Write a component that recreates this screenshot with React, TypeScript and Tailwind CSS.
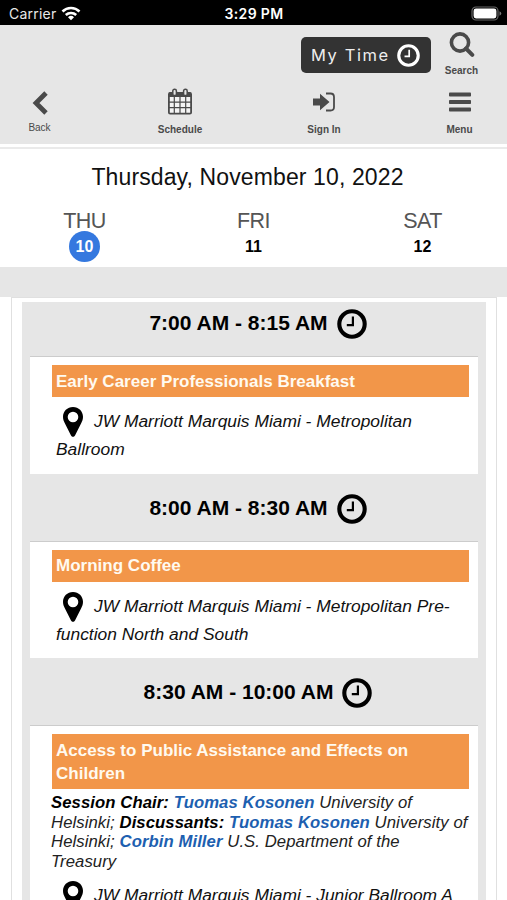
import type { ReactNode } from "react";

const ClockIcon = ({ className }: { className?: string }) => (
  <svg viewBox="0 0 30 30" className={className} fill="none" stroke="currentColor">
    <circle cx="15" cy="15" r="12.7" strokeWidth="4.1" />
    <path d="M15.9 7.6V16.2H9.8" strokeWidth="2.2" />
  </svg>
);

const PinIcon = () => (
  <svg viewBox="0 0 20 30" className="w-5 h-[30px] shrink-0" fill="black">
    <path
      fillRule="evenodd"
      d="M10 0C4.3 0 0 4.4 0 9.8c0 2.6.8 4.3 1.7 6.3l6.3 12.3c.9 1.8 3.1 1.8 4 0l6.3-12.3c.9-2 1.7-3.7 1.7-6.3C20 4.4 15.7 0 10 0Zm0 4.7a5.3 5.3 0 1 1 0 10.6a5.3 5.3 0 0 1 0-10.6Z"
    />
  </svg>
);

const CalendarIcon = () => (
  <svg viewBox="0 0 26 28" className="w-[26px] h-7" fill="none" stroke="currentColor">
    <rect x="1.9" y="5" width="22.2" height="20.6" rx="1.2" fill="#f4f4f4" strokeWidth="1.8" />
    <path d="M2 4.5H24V9H2Z" fill="currentColor" stroke="none" />
    <path d="M2 14.2H24M2 19.6H24M7.3 9V25M13 9V25M18.7 9V25" strokeWidth="1.2" />
    <rect x="5.8" y="1.2" width="3.6" height="6.4" rx="1.7" fill="#e6e6e6" strokeWidth="1.5" />
    <rect x="16.6" y="1.2" width="3.6" height="6.4" rx="1.7" fill="#e6e6e6" strokeWidth="1.5" />
  </svg>
);

const StatusBar = () => (
  <div className="flex h-[25px] items-center bg-black text-white font-[Inter,sans-serif]">
    <div className="flex w-[220px] items-center pl-[9px] pt-0.5 text-[14px] tracking-[0.22px] text-[#e8e8e8]">
      Carrier
      <svg viewBox="0 0 20 15" className="ml-[5px] h-[15px] w-5" fill="none" stroke="white" strokeWidth="2.6">
        <path d="M1.5 5.5A12.2 12.2 0 0 1 18.5 5.5" />
        <path d="M4.8 9A7.6 7.6 0 0 1 15.2 9" />
        <path d="M10 14.3L7 11.3A4.3 4.3 0 0 1 13 11.3Z" fill="white" stroke="none" />
      </svg>
    </div>
    <div className="w-[68px] pt-0.5 text-center text-[14px] font-semibold tracking-[0.35px] whitespace-nowrap">
      3:29 PM
    </div>
    <svg viewBox="0 0 31 15" className="mt-0.5 ml-auto mr-[5px] h-[15px] w-[31px]">
      <rect x="1" y="1" width="26" height="13" rx="4" fill="none" stroke="#666" strokeWidth="1.2" />
      <rect x="2.6" y="2.6" width="22.8" height="9.8" rx="2.4" fill="white" />
      <path d="M28.5 5.2V9.8Q30.3 9 30.3 7.5T28.5 5.2" fill="#777" />
    </svg>
  </div>
);

const Header = () => (
  <header className="h-[119px] bg-[#e6e6e6] text-[#4a4a4a]">
    <div className="flex h-[54px] justify-end pt-1">
      <button className="mt-2 mr-px flex h-9 w-[130px] items-center rounded-[5px] bg-[#333] pl-[10px] text-[17px] tracking-[1.7px] text-[#eee] font-[Inter,sans-serif] whitespace-nowrap">
        <span className="w-[82px] pt-px text-left text-[16.5px] tracking-[1.6px]">My Time</span>
        <ClockIcon className="ml-[4px] size-[23px] shrink-0 text-white" />
      </button>
      <button className="mr-[16px] flex w-[59px] flex-col items-center text-[10px] font-bold">
        <svg viewBox="0 0 26 26" className="mt-[2px] size-[26px]" fill="none" stroke="currentColor">
          <circle cx="11" cy="11.5" r="8.6" strokeWidth="3.6" />
          <path d="M17 17.5L23.3 23.8" strokeWidth="4" strokeLinecap="round" />
        </svg>
        <span className="mt-[6px]">Search</span>
      </button>
    </div>
    <nav className="flex h-[65px] pt-[9px] text-[10px] font-bold">
      <button className="flex w-[79px] flex-col items-center font-normal">
        <svg viewBox="0 0 16 24" className="mt-[3px] h-6 w-4" fill="none" stroke="currentColor" strokeWidth="4.8">
          <path d="M14 2L4 12L14 22" />
        </svg>
        <span className="mt-[5px]">Back</span>
      </button>
      <button className="ml-[61px] flex w-20 flex-col items-center">
        <CalendarIcon />
        <span className="mt-[6px]">Schedule</span>
      </button>
      <button className="ml-16 flex w-20 flex-col items-center">
        <svg viewBox="0 0 24 20" className="mt-1 h-5 w-6">
          <path d="M1 6.5H8V1.8L17.5 10L8 18.2V13.5H1Z" fill="currentColor" />
          <path
            d="M14 1.5H18.5Q22 1.5 22 5V15Q22 18.5 18.5 18.5H14"
            fill="none"
            stroke="currentColor"
            strokeWidth="1.8"
          />
        </svg>
        <span className="mt-[10px]">Sign In</span>
      </button>
      <button className="ml-[65px] flex w-[61px] flex-col items-center">
        <svg viewBox="0 0 22 20" className="mt-1 h-5 w-[22px]" fill="currentColor">
          <rect y="0.5" width="22" height="4" rx="0.8" />
          <rect y="8" width="22" height="4" rx="0.8" />
          <rect y="15.5" width="22" height="4" rx="0.8" />
        </svg>
        <span className="mt-[10px]">Menu</span>
      </button>
    </nav>
  </header>
);

const Days = () => {
  const days = [
    { name: "THU", date: "10", active: true },
    { name: "FRI", date: "11" },
    { name: "SAT", date: "12" },
  ];
  return (
    <section className="mt-[3px] h-[120px] border-t-2 border-[#eaeaea] pt-[14px]">
      <h1 className="text-center pr-3 text-[23px] tracking-[0.12px] leading-7 text-[#111]">
        Thursday, November 10, 2022
      </h1>
      <div className="mt-[19px] grid grid-cols-3">
        {days.map((day) => (
          <div key={day.name} className="flex flex-col items-center">
            <span className="text-[21.5px] tracking-[-0.5px] leading-[23px] text-[#555]">{day.name}</span>
            <span
              className={
                day.active
                  ? "-mt-[2px] flex size-[31px] items-center justify-center rounded-full bg-[#3478df] text-[16px] font-bold text-white"
                  : "-mt-[2px] flex size-[31px] items-center justify-center text-[16px] font-bold text-black"
              }
            >
              {day.date}
            </span>
          </div>
        ))}
      </div>
    </section>
  );
};

type SessionProps = {
  time: string;
  title: string;
  room: string;
  children?: ReactNode;
};

const Session = ({ time, title, room, children }: SessionProps) => (
  <article className="pb-[13px]">
    <h2 className="flex h-[54px] items-start justify-center gap-[9px] pl-[8px] pt-[6px] text-[21px] font-bold leading-[29px] text-black">
      {time}
      <ClockIcon className="mt-px size-[30px]" />
    </h2>
    <div className="mx-2 min-h-[117.5px] border-t border-[#ccc] bg-white pl-[22px] pr-[9px] pt-2">
      <h3 className="bg-[#f29649] px-1 py-[4.5px] text-[17px] tracking-[0.01px] font-bold leading-[23px] text-[#fffaf0]">
        {title}
      </h3>
      {children}
      <div className="pl-1 pt-[10px] text-[17.4px] italic leading-[28px] text-[#111]">
        <span className="float-left ml-[7px] mr-[11px] h-[28px] w-5">
          <PinIcon />
        </span>
        {room}
      </div>
    </div>
  </article>
);

const Person = ({ name }: { name: string }) => <b className="text-[#1d5fb0]">{name}</b>;

const App = () => {
  return (
    <div className="h-[900px] w-[507px] overflow-hidden bg-white font-['Liberation_Sans',Arial,sans-serif]">
      <StatusBar />
      <Header />
      <Days />
      <div className="h-[30px] bg-[#e6e6e6]" />
      <main className="ml-[11px] w-[486px] border border-[#e0e0e0] px-[10px] pt-1">
        <div className="bg-[#e6e6e6]">
          <Session
            time="7:00 AM - 8:15 AM"
            title="Early Career Professionals Breakfast"
            room="JW Marriott Marquis Miami - Metropolitan Ballroom"
          />
          <Session
            time="8:00 AM - 8:30 AM"
            title="Morning Coffee"
            room="JW Marriott Marquis Miami - Metropolitan Pre-function North and South"
          />
          <Session
            time="8:30 AM - 10:00 AM"
            title="Access to Public Assistance and Effects on Children"
            room="JW Marriott Marquis Miami - Junior Ballroom A"
          >
            <p className="-ml-px pt-1 text-[16.7px] tracking-[0.08px] italic leading-[19.6px] text-[#222]">
              <b className="text-black">Session Chair:</b> <Person name="Tuomas Kosonen" /> University of Helsinki;{" "}
              <b className="text-black">Discussants:</b> <Person name="Tuomas Kosonen" /> University of Helsinki;{" "}
              <Person name="Corbin Miller" /> U.S. Department of the Treasury
            </p>
          </Session>
        </div>
      </main>
    </div>
  );
};

export default App;
